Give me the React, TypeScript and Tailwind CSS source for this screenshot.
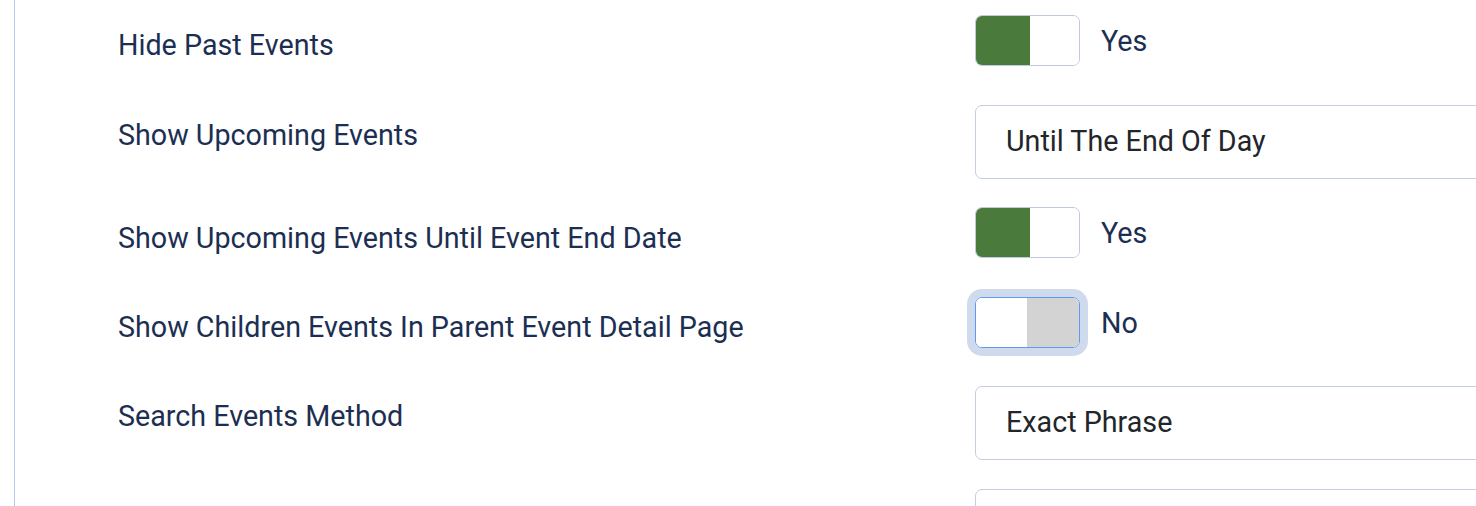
import React from "react";

const labelCls =
  "w-[857px] shrink-0 pt-[10px] text-[28.7px] leading-[40px] text-[#1c2f52]";

function Toggle({ on, focused }: { on: boolean; focused?: boolean }) {
  return (
    <div className="flex items-center self-start">
      <div
        className={
          "flex h-[51px] w-[105px] overflow-hidden rounded-[7px] border " +
          (focused
            ? "border-[#5d9bf2] shadow-[0_0_0_8px_#cfdbed]"
            : "border-[#bfcadc]")
        }
      >
        {on ? (
          <>
            <div className="h-full w-[54px] bg-[#4a7a3c]" />
            <div className="h-full flex-1 bg-white" />
          </>
        ) : (
          <>
            <div className="h-full w-[51px] bg-white" />
            <div className="h-full flex-1 bg-[#d3d3d3]" />
          </>
        )}
      </div>
      <span className="ml-[21px] text-[28.7px] leading-[40px] text-[#1c2f52]">
        {on ? "Yes" : "No"}
      </span>
    </div>
  );
}

function Select({ value }: { value: string }) {
  return (
    <div className="flex h-[74px] w-[700px] shrink-0 items-center self-start rounded-[7px] border border-[#c3cee0] bg-white pl-[30px] text-[28.7px] text-[#22262a]">
      {value}
    </div>
  );
}

export default function App() {
  return (
    <div
      className="relative h-[506px] w-[1476px] overflow-hidden bg-white"
      style={{ fontFamily: "Roboto, 'Noto Sans', sans-serif" }}
    >
      <div className="ml-[14px] h-full border-l border-[#b6c8ea] pl-[103px] pt-[15px]">
        <div className="flex h-[90px]">
          <div className={labelCls}>Hide Past Events</div>
          <Toggle on />
        </div>
        <div className="flex h-[102px]">
          <div className={labelCls + " pt-[9px]"}>Show Upcoming Events</div>
          <Select value="Until The End Of Day" />
        </div>
        <div className="flex h-[90px]">
          <div className={labelCls + " pt-[11px]"}>
            Show Upcoming Events Until Event End Date
          </div>
          <Toggle on />
        </div>
        <div className="flex h-[89px]">
          <div className={labelCls + " pt-[9px]"}>
            Show Children Events In Parent Event Detail Page
          </div>
          <Toggle on={false} focused />
        </div>
        <div className="flex h-[103px]">
          <div className={labelCls + " pt-[9px]"}>Search Events Method</div>
          <Select value="Exact Phrase" />
        </div>
        <div className="flex h-[90px]">
          <div className={labelCls}></div>
          <Select value="" />
        </div>
      </div>
    </div>
  );
}
